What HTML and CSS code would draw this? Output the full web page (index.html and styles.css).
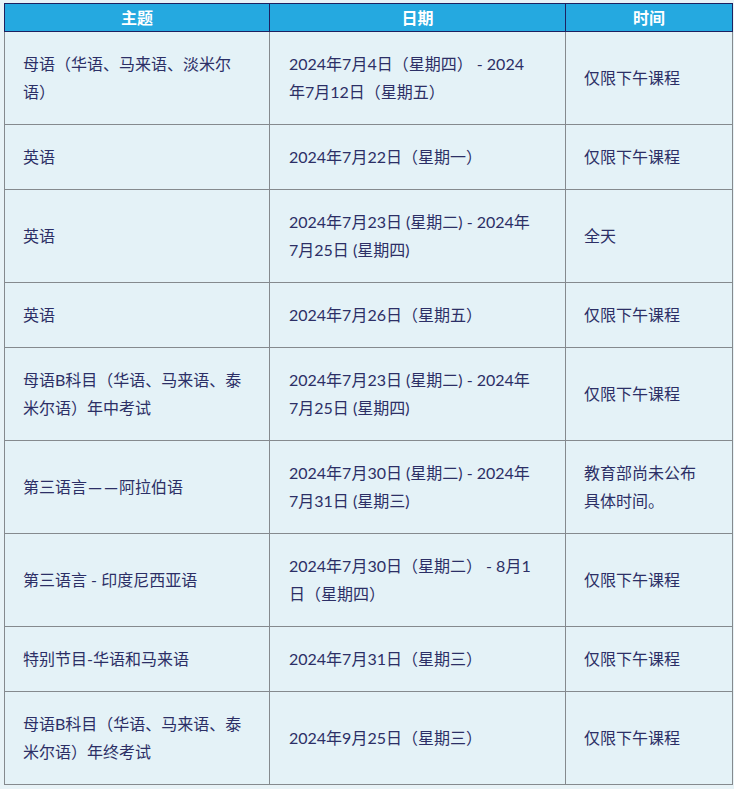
FILE: index.html
```html
<!DOCTYPE html>
<html lang="zh">
<head>
<meta charset="utf-8">
<link rel="stylesheet" href="styles.css">
</head>
<body>
<table class="sched">
  <colgroup>
    <col class="c1"><col class="c2"><col class="c3">
  </colgroup>
  <thead>
    <tr><th>主题</th><th>日期</th><th>时间</th></tr>
  </thead>
  <tbody>
    <tr><td>母语（华语、马来语、淡米尔语）</td><td>2024年7月4日（星期四） - 2024年7月12日（星期五）</td><td>仅限下午课程</td></tr>
    <tr><td>英语</td><td>2024年7月22日（星期一）</td><td>仅限下午课程</td></tr>
    <tr><td>英语</td><td>2024年7月23日 (星期二) - 2024年7月25日 (星期四)</td><td>全天</td></tr>
    <tr><td>英语</td><td>2024年7月26日（星期五）</td><td>仅限下午课程</td></tr>
    <tr><td>母语B科目（华语、马来语、泰米尔语）年中考试</td><td>2024年7月23日 (星期二) - 2024年7月25日 (星期四)</td><td>仅限下午课程</td></tr>
    <tr><td>第三语言<span class="dash">—</span><span class="dash">—</span>阿拉伯语</td><td>2024年7月30日 (星期二) - 2024年7月31日 (星期三)</td><td>教育部尚未公布具体时间。</td></tr>
    <tr><td>第三语言 - 印度尼西亚语</td><td>2024年7月30日（星期二） - 8月1日（星期四）</td><td>仅限下午课程</td></tr>
    <tr><td>特别节目-华语和马来语</td><td>2024年7月31日（星期三）</td><td>仅限下午课程</td></tr>
    <tr><td>母语B科目（华语、马来语、泰米尔语）年终考试</td><td>2024年9月25日（星期三）</td><td>仅限下午课程</td></tr>
  </tbody>
</table>
</body>
</html>
```
FILE: styles.css
```css
html, body {
  margin: 0;
  background: #e8f3f7;
}
body {
  padding: 3px 2px 0 4px;
  font-family: "Lato", "Noto Sans CJK SC", sans-serif;
}
.sched {
  border-collapse: collapse;
  width: 728px;
  table-layout: fixed;
  background: #e4f2f7;
}
.c1 { width: 265px; }
.c2 { width: 296px; }
.c3 { width: 167px; }
.sched th {
  background: #25a9e0;
  color: #ffffff;
  font-weight: 700;
  font-size: 16px;
  line-height: 27px;
  height: 27px;
  padding: 0;
  border: 1px solid #1d2160;
  text-align: center;
}
.sched td {
  border: 1px solid #858a8e;
  padding: 18px 18px 18px 18px;
  font-size: 16px;
  line-height: 28px;
  color: #2c2f66;
  vertical-align: middle;
  text-align: left;
}
.sched td:nth-child(2) { padding-left: 19px; padding-right: 28px; }
.sched td:nth-child(3) { padding-right: 31px; }
.dash {
  display: inline-block;
  width: 16px;
  text-align: center;
  font-family: "DejaVu Sans", sans-serif;
  transform: scaleX(0.85);
}
```
